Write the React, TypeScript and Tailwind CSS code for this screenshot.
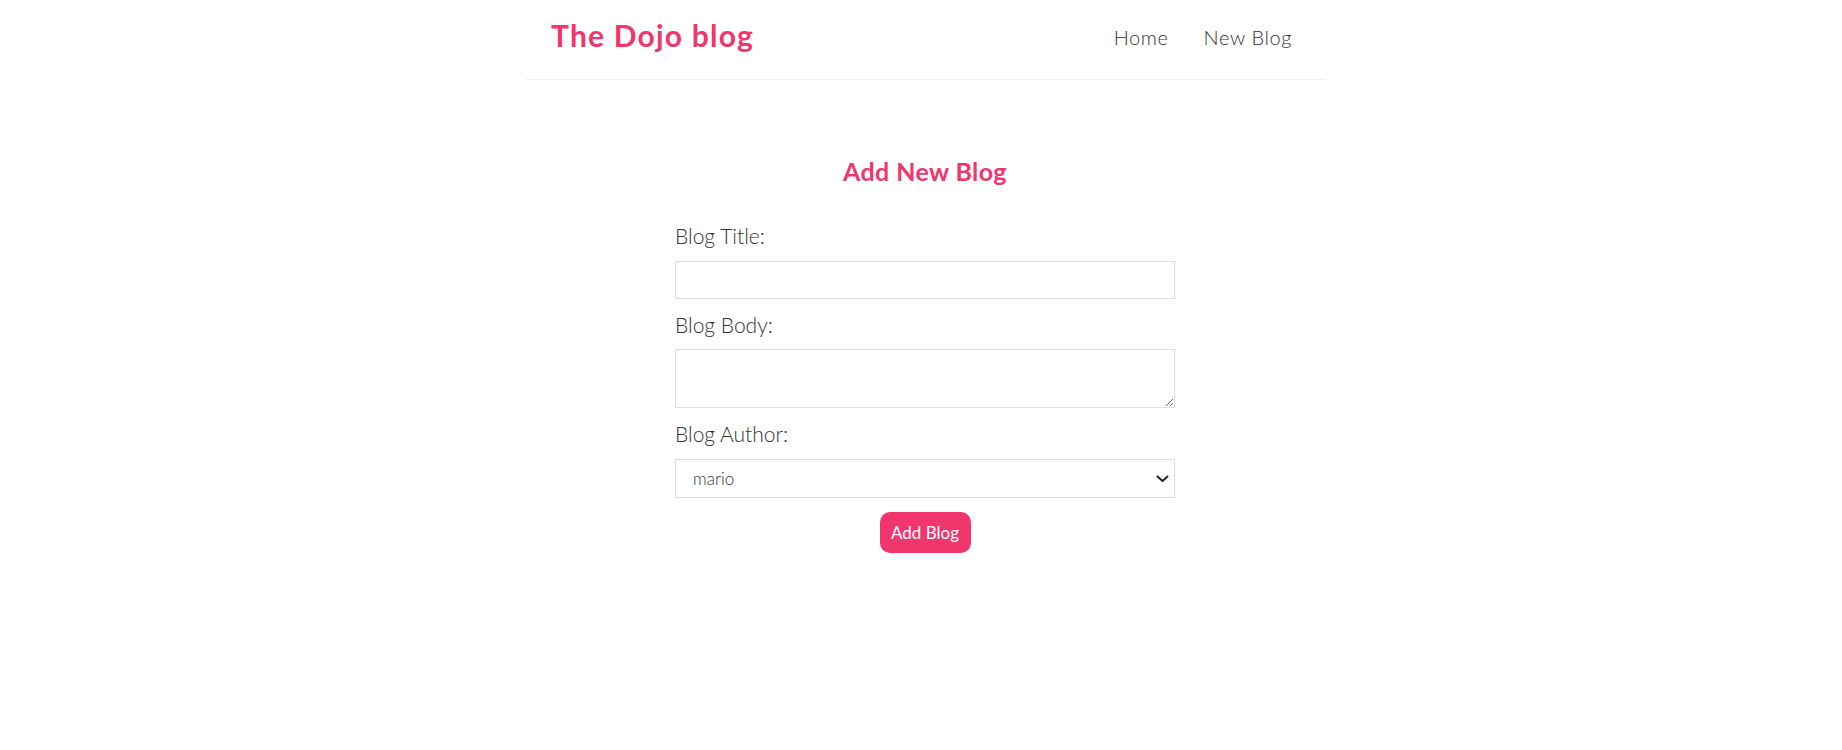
import { useState } from "react";

const font = { fontFamily: "Lato, 'Noto Sans', sans-serif" };

export default function App() {
    const [title, setTitle] = useState("")
    const [body, setBody] = useState("")
    const [author, setAuthor] = useState("mario")

    return (
        <div className="min-h-screen w-full bg-white pl-[8px] text-[#333]" style={font}>
            <nav className="mx-auto flex h-[80px] w-[800px] items-center border-b border-[#f2f2f2] pl-[26px] pr-[33px] pb-[9px]">
                <h1 className="text-[30px] font-bold tracking-[1.2px] text-[#f1356d]">The Dojo blog</h1>
                <div className="ml-auto flex gap-[35px] pt-[4px] text-[20px] font-light tracking-[0.6px]">
                    <a href="#">Home</a>
                    <a href="#">New Blog</a>
                </div>
            </nav>

            <div className="mx-auto w-[500px] pt-[76px] text-center">
                <h2 className="text-[25px] font-bold leading-[30px] tracking-[0.4px] text-[#f1356d]">Add New Blog</h2>
                <form className="mt-[38px] flex flex-col" onSubmit={(e) => e.preventDefault()}>
                    <label className="block text-left text-[21px] font-light leading-[24px]">Blog Title:</label>
                    <input
                        type="text"
                        className="mt-[13px] block h-[38px] w-full border border-[#ddd] px-[12px] outline-none"
                        value={title}
                        onChange={(e) => setTitle(e.currentTarget.value)}
                    />
                    <label className="mt-[14px] block text-left text-[21px] font-light leading-[24px]">Blog Body:</label>
                    <textarea
                        className="mt-[12px] block h-[59px] w-full border border-[#ddd] px-[12px] outline-none"
                        value={body}
                        onChange={(e) => setBody(e.currentTarget.value)}
                    />
                    <label className="mt-[14px] block text-left text-[21px] font-light leading-[24px]">Blog Author:</label>
                    <div className="relative mt-[13px]">
                        <select
                            className="block h-[39px] w-full appearance-none border border-[#ddd] bg-white px-[17px] text-[17px] font-light outline-none"
                            value={author}
                            onChange={(e) => setAuthor(e.currentTarget.value)}
                        >
                            <option value="mario">mario</option>
                            <option value="yoshi">yoshi</option>
                        </select>
                        <svg className="pointer-events-none absolute right-[6px] top-[16px]" width="13" height="8" viewBox="0 0 13 8" fill="none">
                            <path d="M1.5 1.5 L6.5 6 L11.5 1.5" stroke="#222" strokeWidth="2" strokeLinecap="round" strokeLinejoin="round" />
                        </svg>
                    </div>
                    <div className="mt-[14px] flex justify-center">
                        <button className="h-[41px] w-[91px] rounded-[10px] bg-[#f1356d] text-[17px] text-white">Add Blog</button>
                    </div>
                </form>
            </div>
        </div>
    );
}
